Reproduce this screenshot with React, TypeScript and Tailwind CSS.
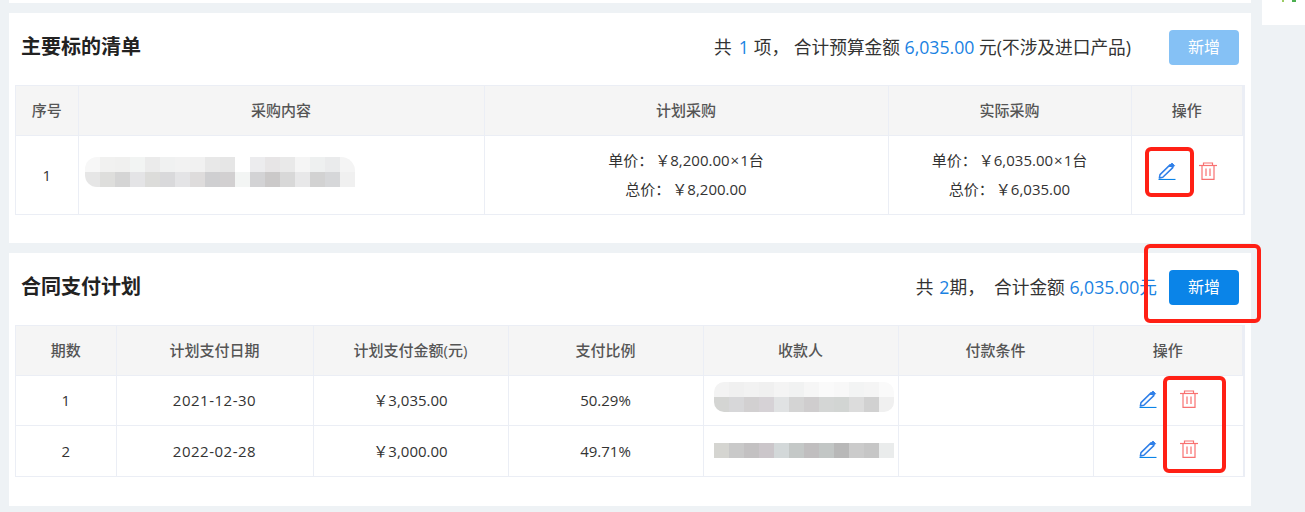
const fontStack = '[font-family:"Open_Sans","Noto_Sans_CJK_SC",sans-serif]'

const mosaicA = [
  ["#f7f7f7", "#f1f1f0", "#f0f0ef", "#f2f4f3", "#ebebeb", "#f0f1f1", "#f2f2f2", "#f1f1f1", "#e8e8e8", "#e6e6e6", "#ffffff", "#ececee", "#e7e5e6", "#e9e9e9", "#f5f5f5", "#eef0f0", "#eaebec", "#f4f4f4"],
  ["#e6e6e6", "#dededc", "#d5d5d5", "#e4e4e6", "#dcdcda", "#d9d9db", "#e4e4e6", "#dedcdc", "#cfcfd1", "#d2d0d1", "#f3f5f4", "#d3d3d5", "#cbc9c9", "#d8d8d8", "#e8e8e9", "#d2d2d2", "#d6d7d9", "#f0f0f0"],
]
const mosaicB = [
  ["#f3f3f3", "#f0f0f0", "#f2f2f2", "#f0f0f0", "#f4f4f4", "#f1f2f2", "#f6f6f6", "#fafafa", "#f8f8f8", "#f3f4f4", "#f5f5f5", "#fafafa"],
  ["#d4d5d3", "#d7d7d9", "#d2d0d1", "#d6d2d6", "#e0e2e3", "#d4d4d4", "#cfcdce", "#d4d6d5", "#d2d5d3", "#dcdcdc", "#d1d1d1", "#f0f0f0"],
]
const mosaicC = [
  ["#d5d5d1", "#c9c9c9", "#c3c1c2", "#cbc6ca", "#d3d8d9", "#c4c8c7", "#c0bebf", "#c2c6c5", "#b8b8b8", "#cbcbcb", "#c6c6c6", "#eaecec"],
]

function Mosaic({ rows, className }: { rows: string[][]; className?: string }) {
  return (
    <div className={`flex w-fit flex-col overflow-hidden ${className ?? ""}`}>
      {rows.map((row, i) => (
        <div key={i} className="flex">
          {row.map((c, j) => (
            <div key={j} className="h-[15px] w-[15px]" style={{ background: c }} />
          ))}
        </div>
      ))}
    </div>
  )
}

function PenIcon() {
  return (
    <svg width="18" height="18" viewBox="0 0 18 18" fill="none">
      <path d="M2 12.6 L12 2.9 L14.8 5.6 L4.8 15.2 L1.4 16 Z" stroke="#2f7fe8" strokeWidth="1.5" strokeLinejoin="round" />
      <path d="M12.4 2.5 L14 1 L16.6 3.6 L15.1 5.2 Z" fill="#2f7fe8" stroke="#2f7fe8" strokeWidth="0.8" strokeLinejoin="round" />
      <path d="M0.5 17.5 H17.5" stroke="#0a84e8" strokeWidth="1.2" />
    </svg>
  )
}

function TrashIcon() {
  return (
    <svg width="18" height="18" viewBox="0 0 18 18" fill="none" stroke="#f87171" strokeWidth="1.2">
      <path d="M0 3.5 H18" />
      <path d="M4.5 3.5 V1 H13.5 V3.5" />
      <path d="M3 3.5 V17.4 H15 V3.5" />
      <path d="M7 6.5 V14 M11 6.5 V14" />
    </svg>
  )
}

function Actions({ className }: { className?: string }) {
  return (
    <div className={`flex items-center justify-center gap-[23px] ${className ?? ""}`}>
      <PenIcon />
      <TrashIcon />
    </div>
  )
}

function Th({ children }: { children: React.ReactNode }) {
  return (
    <th className="h-[49px] border-r border-b border-[#ebeef5] bg-[#f5f5f5] p-0 text-center text-[15px] font-medium text-[#555]">
      {children}
    </th>
  )
}

function Td({ children, className }: { children?: React.ReactNode; className?: string }) {
  return (
    <td className={`border-r border-[#ebeef5] p-0 text-center text-[15px] text-[#333] ${className ?? ""}`}>
      {children}
    </td>
  )
}

function Header({ title, children }: { title: string; children: React.ReactNode }) {
  return (
    <div className="flex h-[72px] items-center pr-[12px] pb-[4px] pl-[12px]">
      <h2 className="text-[20px] font-bold text-[#222]">{title}</h2>
      <div className="ml-auto flex items-center text-[17.7px] text-[#333]">{children}</div>
    </div>
  )
}

function Num({ children, className }: { children: React.ReactNode; className?: string }) {
  return <span className={`text-[#1a82e2] ${className ?? ""}`}>{children}</span>
}

function AddButton({ disabled }: { disabled?: boolean }) {
  return (
    <button className={`inline-block h-[35px] w-[70px] rounded-[4px] text-[16px] text-white ${disabled ? "ml-[38px] bg-[#85c1f5]" : "ml-[12px] bg-[#0a84e8]"}`}>
      新增
    </button>
  )
}

function PriceLines({ unit, total }: { unit: string; total: string }) {
  return (
    <div className="leading-[29px]">
      <div>
        单价：<span className="ml-[2px]">￥{unit}</span>
        <span className="mx-[1px]">×</span>1台
      </div>
      <div>
        总价：<span className="ml-[2px]">￥{total}</span>
      </div>
    </div>
  )
}

export default function App() {
  return (
    <div className={`relative flex h-[512px] w-[1305px] items-start overflow-hidden bg-[#eef2f5] ${fontStack}`}>
      <div className="ml-[9px] flex w-[1242px] flex-col gap-[10px]">
        <div className="h-[3px] bg-white" />

        {/* 主要标的清单 */}
        <section className="h-[230px] bg-white">
          <Header title="主要标的清单">
            共<Num className="mr-[5px] ml-[7px]">1</Num>项，&nbsp;合计预算金额&nbsp;<Num>6,035.00</Num>&nbsp;元(不涉及进口产品)
            <AddButton disabled />
          </Header>
          <div className="mx-[6px] border border-r-[2px] border-[#ebeef5]">
            <table className="w-full table-fixed border-collapse">
              <colgroup>
                <col className="w-[62px]" />
                <col className="w-[406px]" />
                <col className="w-[404px]" />
                <col className="w-[243px]" />
                <col />
              </colgroup>
              <thead>
                <tr>
                  <Th>序号</Th>
                  <Th>采购内容</Th>
                  <Th>计划采购</Th>
                  <Th>实际采购</Th>
                  <Th>操作</Th>
                </tr>
              </thead>
              <tbody>
                <tr className="h-[79px]">
                  <Td>1</Td>
                  <Td>
                    <Mosaic rows={mosaicA} className="mb-[5px] ml-[6px] rounded-l-[12px] rounded-tr-[14px]" />
                  </Td>
                  <Td><PriceLines unit="8,200.00" total="8,200.00" /></Td>
                  <Td><PriceLines unit="6,035.00" total="6,035.00" /></Td>
                  <Td className="border-r-0"><Actions className="mb-[8px]" /></Td>
                </tr>
              </tbody>
            </table>
          </div>
        </section>

        {/* 合同支付计划 */}
        <section className="h-[253px] bg-white">
          <Header title="合同支付计划">
            共<Num className="ml-[6px]">2</Num>期，&nbsp;&nbsp;合计金额&nbsp;<Num>6,035.00元</Num>
            <AddButton />
          </Header>
          <div className="mx-[6px] border border-r-[2px] border-[#ebeef5]">
            <table className="w-full table-fixed border-collapse">
              <colgroup>
                <col className="w-[100px]" />
                <col className="w-[197px]" />
                <col className="w-[195px]" />
                <col className="w-[195px]" />
                <col className="w-[195px]" />
                <col className="w-[195px]" />
                <col />
              </colgroup>
              <thead>
                <tr>
                  <Th>期数</Th>
                  <Th>计划支付日期</Th>
                  <Th>计划支付金额(元)</Th>
                  <Th>支付比例</Th>
                  <Th>收款人</Th>
                  <Th>付款条件</Th>
                  <Th>操作</Th>
                </tr>
              </thead>
              <tbody>
                <tr className="h-[50px] border-b border-[#ebeef5]">
                  <Td>1</Td>
                  <Td className="tracking-[0.5px]">2021-12-30</Td>
                  <Td>￥3,035.00</Td>
                  <Td>50.29%</Td>
                  <Td><Mosaic rows={mosaicB} className="mb-[7px] ml-[10px] rounded-l-[10px] rounded-r-[10px]" /></Td>
                  <Td />
                  <Td className="border-r-0"><Actions className="mb-[2px]" /></Td>
                </tr>
                <tr className="h-[51px]">
                  <Td>2</Td>
                  <Td className="tracking-[0.5px]">2022-02-28</Td>
                  <Td>￥3,000.00</Td>
                  <Td>49.71%</Td>
                  <Td><Mosaic rows={mosaicC} className="ml-[10px]" /></Td>
                  <Td />
                  <Td className="border-r-0"><Actions className="mb-[3px]" /></Td>
                </tr>
              </tbody>
            </table>
          </div>
        </section>
      </div>

      {/* cropped neighbouring panel, top right */}
      <div className="ml-[11px] flex h-[25px] w-[43px] items-start bg-white pl-[20px]">
        <div className="h-[2px] w-[2px] bg-[#9ccc65]" />
        <div className="ml-[8px] h-[2px] w-[4px] bg-[#4caf50]" />
      </div>

      {/* red review markers drawn over the screenshot */}
      <div className="absolute top-[147px] left-[1145px] h-[50px] w-[49px] rounded-[6px] border-[4px] border-[#ff2015]" />
      <div className="absolute top-[244px] left-[1144px] h-[79px] w-[117px] rounded-[6px] border-[4px] border-[#ff2015]" />
      <div className="absolute top-[376px] left-[1163px] h-[97px] w-[63px] rounded-[6px] border-[4px] border-[#ff2015]" />
    </div>
  )
}
